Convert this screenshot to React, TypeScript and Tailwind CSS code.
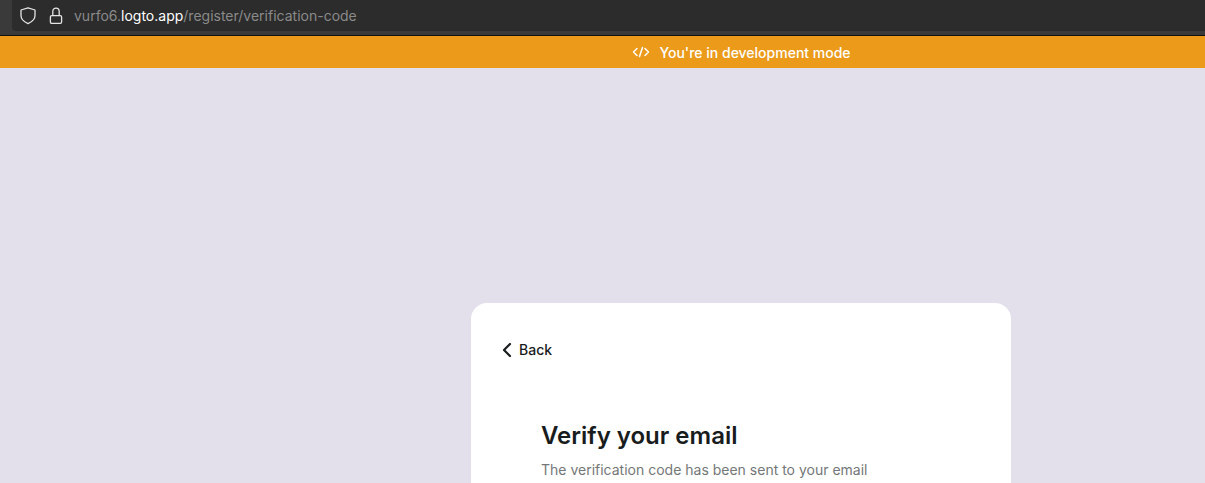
import { ChevronLeft } from 'lucide-react';

export default function App() {
  return (
    <div className="h-[483px] w-[1205px] overflow-hidden bg-[#e3e0ec] font-['Inter',sans-serif]">
      {/* browser url bar */}
      <div className="h-[36px] bg-[#3a3a3a] border-b border-[#111111]">
        <div className="h-[31px] ml-3 flex items-center rounded-bl-[4px] bg-[#2c2c2c] pl-[8px]">
          <svg width="16" height="18" viewBox="0 0 16 18" fill="none" stroke="#e4e4e4" strokeWidth="1.3" strokeLinejoin="round">
            <path d="M8 0.900 15 3v5.600c0 3.600-3 6.300-7 8-4-1.700-7-4.400-7-8V3z" />
          </svg>
          <svg className="ml-[12px]" width="16" height="18" viewBox="0 0 16 18" fill="none" stroke="#e4e4e4" strokeWidth="1.3">
            <rect x="2.400" y="8.600" width="11.200" height="7.800" rx="1.300" />
            <path d="M4.800 8.600V4.300a3.200 3.200 0 0 1 6.400 0v4.300" />
          </svg>
          <span className="ml-[10px] text-[14px] text-[#8a8a8a]">
            vurfo6.<span className="text-white">logto.app</span>/register/verification-code
          </span>
        </div>
      </div>

      {/* page continues past the right edge of the window */}
      <div className="w-[1482px]">
        <div className="h-[32px] bg-[#eb9a1a] flex items-center justify-center gap-[9px] pl-[1px] text-white">
          <svg width="18" height="12" viewBox="0 0 18 12" fill="none" stroke="white" strokeWidth="1.5" strokeLinecap="round" strokeLinejoin="round">
            <path d="M5 2.500 1.500 6 5 9.500M13 2.500 16.500 6 13 9.500M10.500 1.500 7.500 10.500" />
          </svg>
          <span className="text-[14px] font-medium">You're in development mode</span>
        </div>

        <div className="flex justify-center pt-[235px]">
          <div className="w-[540px] h-[400px] rounded-t-[16px] bg-white text-[#191c1d]">
            <div className="pt-[35px] pl-[24px] flex items-center">
              <ChevronLeft size={24} strokeWidth={2.2} />
              <span className="text-[14px] leading-[24px] font-medium">Back</span>
            </div>
            <div className="pl-[70px] pt-[58px]">
              <h1 className="text-[24px] leading-[32px] font-semibold">Verify your email</h1>
              <p className="mt-[8px] text-[14px] leading-[20px] text-[#747778]">The verification code has been sent to your email</p>
            </div>
          </div>
        </div>
      </div>
    </div>
  );
}
